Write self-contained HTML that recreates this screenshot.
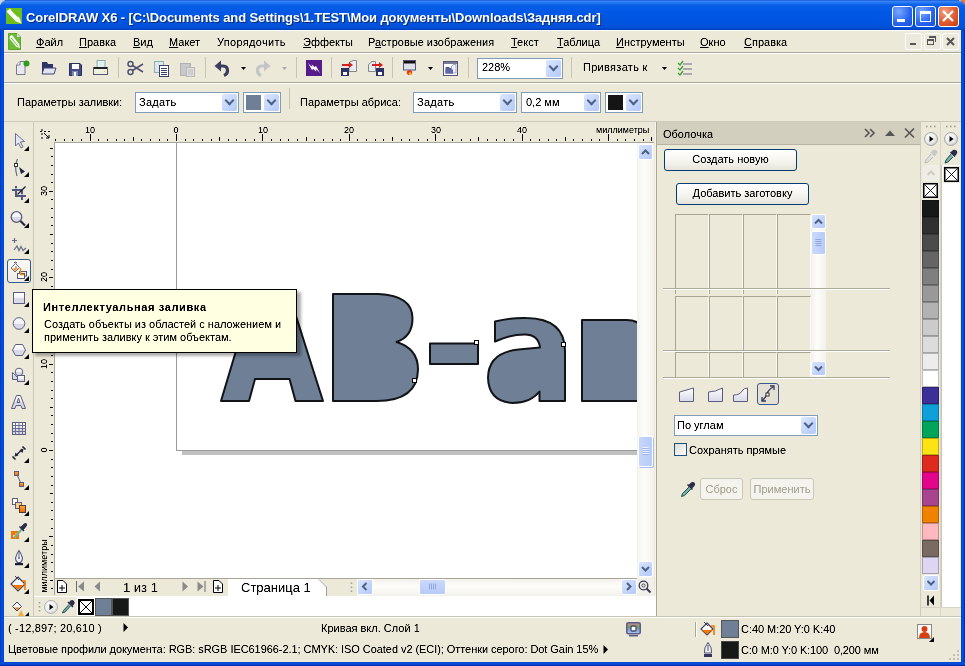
<!DOCTYPE html>
<html><head><meta charset="utf-8"><style>
*{margin:0;padding:0;box-sizing:border-box}
html,body{width:965px;height:666px;overflow:hidden;background:#ece9d8}
body{position:relative;font-family:"Liberation Sans",sans-serif;font-size:11px;color:#000}
.a{position:absolute}
.t{position:absolute;font-size:11px;line-height:13px;white-space:nowrap;filter:url(#tc)}
.u{text-decoration:underline;text-underline-offset:1px}
.sepv{position:absolute;width:1px;background:#c8c4b2}
.seph{position:absolute;height:2px;border-top:1px solid #aca899;border-bottom:1px solid #fff}
.combo{position:absolute;background:#fff;border:1px solid #7f9db9}
.cbtn{position:absolute;top:1px;bottom:1px;right:1px;width:15px;border-radius:2px;background:linear-gradient(135deg,#dde8fe 0%,#c6d7fb 50%,#b3c9f8 100%)}
.cbtn:after{content:"";position:absolute;left:4px;top:3px;width:5px;height:5px;border-right:2.4px solid #4d6185;border-bottom:2.4px solid #4d6185;transform:rotate(45deg)}
svg{position:absolute;overflow:visible}

</style></head><body><div id="root" style="position:absolute;left:0;top:0;width:965px;height:666px;overflow:hidden;will-change:transform">
<svg width="0" height="0" style="position:absolute"><filter id="tc"><feComponentTransfer><feFuncA type="table" tableValues="0 0.22 0.92 1"/></feComponentTransfer></filter></svg>
<!-- title bar -->
<div class="a" style="left:0;top:0;width:965px;height:30px;background:linear-gradient(#0a3fc2 0px,#3d8dfb 1px,#2e7ff5 2px,#0a5fe8 5px,#0058e6 12px,#0054e0 22px,#0050d8 28px,#003cb8 30px)"></div>
<div class="a" style="left:0;top:30px;width:4px;height:636px;background:linear-gradient(90deg,#0031b5,#0055e5 2px,#0042c8)"></div>
<div class="a" style="left:961px;top:30px;width:4px;height:636px;background:linear-gradient(90deg,#0042c8,#0055e5 2px,#00219c)"></div>
<div class="a" style="left:0;top:662px;width:965px;height:4px;background:linear-gradient(#0042c8,#0055e5 2px,#00219c)"></div>
<!-- app icon -->
<svg style="left:6px;top:8px" width="16" height="16"><rect width="16" height="16" fill="#6fbe1e"/><path d="M0.5 3.5 L4 0.5 L13.5 10 L10 13.5 Z" fill="#fff"/><path d="M10 13.5 L13.5 10 L15.5 15.5 Z" fill="#fff"/><path d="M5 1.5 L12 8.5" stroke="#6fbe1e" stroke-width="1.1"/></svg>
<svg style="left:0;top:0" width="6" height="6"><path d="M0 0 H5 L4 1 L2 2 L1 4 L0 5 Z" fill="#c9d1e0"/></svg>
<svg style="left:959px;top:0" width="6" height="6"><path d="M0 0 H6 V5 L5 4 L4 2 L2 1 Z" fill="#e8763a"/><path d="M0 0 H2 L1 1 Z" fill="#fff"/></svg>
<div class="a" style="left:27px;top:11px;font:bold 13px/16px 'Liberation Sans';color:#0a2a70;white-space:nowrap;letter-spacing:-0.1px">CorelDRAW X6 - [C:\Documents and Settings\1.TEST\Мои документы\Downloads\Задняя.cdr]</div>
<div class="a" style="left:26px;top:10px;font:bold 13px/16px 'Liberation Sans';color:#fff;white-space:nowrap;letter-spacing:-0.1px">CorelDRAW X6 - [C:\Documents and Settings\1.TEST\Мои документы\Downloads\Задняя.cdr]</div>
<!-- title buttons -->
<div class="a" style="left:892px;top:6px;width:21px;height:21px;border:1px solid #fff;border-radius:3px;background:radial-gradient(circle at 30% 25%,#7aa8ff,#2663ee 60%,#1c4fd8)"></div>
<div class="a" style="left:897px;top:19px;width:8px;height:3px;background:#fff"></div>
<div class="a" style="left:915px;top:6px;width:21px;height:21px;border:1px solid #fff;border-radius:3px;background:radial-gradient(circle at 30% 25%,#7aa8ff,#2663ee 60%,#1c4fd8)"></div>
<div class="a" style="left:920px;top:11px;width:11px;height:11px;border:1px solid #fff;border-top-width:3px"></div>
<div class="a" style="left:938px;top:6px;width:21px;height:21px;border:1px solid #fff;border-radius:3px;background:radial-gradient(circle at 30% 25%,#f0a080,#e05a30 55%,#c83c10)"></div>
<svg style="left:938px;top:6px" width="21" height="21"><path d="M5 5 L15 15 M15 5 L5 15" stroke="#fff" stroke-width="2.2"/></svg>

<!-- menu bar -->
<div class="a" style="left:4px;top:30px;width:957px;height:1px;background:#fff"></div>
<svg style="left:8px;top:33px" width="13" height="17"><path d="M0.5 0.5 H9 L12.5 4 V16.5 H0.5 Z" fill="#6cbd33" stroke="#5ea52c"/><path d="M9 0.5 V4 H12.5" fill="#d8d4ec"/><path d="M2 3 L4 2 L11 11 L12 15 L8 13.5 L1.5 5.5 Z" fill="#fff"/><path d="M3 5 L10 13" stroke="#6cbd33" stroke-width="1"/></svg>
<div class="t" style="left:36px;top:36px"><span class="u">Ф</span>айл</div>
<div class="t" style="left:79px;top:36px"><span class="u">П</span>равка</div>
<div class="t" style="left:133px;top:36px"><span class="u">В</span>ид</div>
<div class="t" style="left:169px;top:36px"><span class="u">М</span>акет</div>
<div class="t" style="left:217px;top:36px;letter-spacing:0.3px">Упорядочить</div>
<div class="t" style="left:303px;top:36px"><span class="u">Э</span>ффекты</div>
<div class="t" style="left:368px;top:36px">Р<span class="u">а</span>стровые изображения</div>
<div class="t" style="left:511px;top:36px"><span class="u">Т</span>екст</div>
<div class="t" style="left:557px;top:36px"><span class="u">Т</span>аблица</div>
<div class="t" style="left:616px;top:36px"><span class="u">И</span>нструменты</div>
<div class="t" style="left:700px;top:36px"><span class="u">О</span>кно</div>
<div class="t" style="left:744px;top:36px"><span class="u">С</span>правка</div>
<!-- mdi buttons -->
<div class="a" style="left:905px;top:33px;width:17px;height:17px;border:1px solid #fff;border-radius:2px;background:#ebe8dc"></div>
<div class="a" style="left:910px;top:43px;width:6px;height:2px;background:#555"></div>
<div class="a" style="left:924px;top:33px;width:17px;height:17px;border:1px solid #fff;border-radius:2px;background:#ebe8dc"></div>
<div class="a" style="left:927px;top:39px;width:7px;height:6px;border:1px solid #555;border-top-width:2px"></div>
<div class="a" style="left:929px;top:36px;width:7px;height:6px;border-top:2px solid #555;border-right:1px solid #555"></div>
<div class="a" style="left:942px;top:33px;width:17px;height:17px;border:1px solid #fff;border-radius:2px;background:#ebe8dc"></div>
<svg style="left:942px;top:33px" width="17" height="17"><path d="M5 5 L12 12 M12 5 L5 12" stroke="#555" stroke-width="2"/></svg>
<div class="seph" style="left:4px;top:52px;width:957px"></div>
<!-- standard toolbar -->
<div class="seph" style="left:4px;top:82px;width:957px"></div>
<div class="sepv" style="left:118px;top:57px;height:21px"></div>
<div class="sepv" style="left:205px;top:57px;height:21px"></div>
<div class="sepv" style="left:296px;top:57px;height:21px"></div>
<div class="sepv" style="left:331px;top:57px;height:21px"></div>
<div class="sepv" style="left:392px;top:57px;height:21px"></div>
<div class="sepv" style="left:468px;top:57px;height:21px"></div>
<div class="sepv" style="left:571px;top:57px;height:21px"></div>
<!-- new -->
<svg style="left:15px;top:60px" width="16" height="16"><path d="M1.5 5 L5 1.5 H10 V14.5 H1.5 Z" fill="#e8e8f0" stroke="#7a7a90"/><path d="M1.5 5 H5 V1.5" fill="#fff" stroke="#7a7a90"/><circle cx="11.5" cy="3.5" r="3" fill="#2e9a1e"/></svg>
<!-- open -->
<svg style="left:41px;top:60px" width="16" height="16"><path d="M1 2 H6 L7 4 H12 V14 H1 Z" fill="#2d3566"/><path d="M3 8 H15 L13 14 H1 Z" fill="#dfe3f2" stroke="#3d4575"/></svg>
<!-- save -->
<svg style="left:69px;top:63px" width="13" height="13"><path d="M0.5 0.5 H11 L12.5 2 V12.5 H0.5 Z" fill="#454a80" stroke="#2a2f60"/><rect x="3" y="1" width="7" height="5" fill="#fff"/><rect x="3" y="8" width="6" height="5" fill="#8088b8"/><rect x="5" y="9" width="2" height="4" fill="#fff"/></svg>
<!-- print -->
<svg style="left:93px;top:60px" width="16" height="16"><rect x="4" y="0.5" width="8" height="7" fill="#e0f0f0" stroke="#8aa"/><rect x="0.5" y="7.5" width="14" height="7" fill="#f0f0e0" stroke="#555a70"/><rect x="1" y="7" width="13" height="2" fill="#222"/><rect x="11" y="11" width="1" height="1" fill="#dc0"/></svg>
<!-- cut -->
<svg style="left:127px;top:60px" width="17" height="16"><circle cx="3.5" cy="4" r="2.5" fill="none" stroke="#505070" stroke-width="1.5"/><circle cx="3.5" cy="12" r="2.5" fill="none" stroke="#505070" stroke-width="1.5"/><path d="M5.5 5.5 L16 12 M5.5 10.5 L16 4" stroke="#505070" stroke-width="1.5"/></svg>
<!-- copy -->
<svg style="left:154px;top:61px" width="16" height="16"><rect x="0.5" y="0.5" width="9" height="11" fill="#dce8e8" stroke="#8ab0b0"/><rect x="5.5" y="4.5" width="9" height="11" fill="#fff" stroke="#3a4070"/><path d="M7 7.5 H13 M7 9.5 H13 M7 11.5 H13 M7 13.5 H13" stroke="#3a4070"/></svg>
<!-- paste -->
<svg style="left:180px;top:61px" width="16" height="16"><rect x="0.5" y="2.5" width="10" height="12" fill="#c8c8c8" stroke="#b0b0b0"/><rect x="6.5" y="6.5" width="8" height="9" fill="#e0e0e0" stroke="#b8b8b8"/><path d="M8 9 H13 M8 11 H13 M8 13 H13" stroke="#bbb"/></svg>
<!-- undo -->
<svg style="left:214px;top:60px" width="16" height="17"><path d="M0.5 6 L7 0.5 V11.5 Z" fill="#3a3e5e"/><path d="M6 6 H9 Q13.5 6 13.5 10.5 Q13.5 14 10 15.5" stroke="#3a3e5e" stroke-width="3.2" fill="none"/></svg>
<svg style="left:241px;top:67px" width="6" height="4"><path d="M0 0 H5 L2.5 3 Z" fill="#000"/></svg>
<!-- redo -->
<svg style="left:255px;top:60px" width="16" height="17"><path d="M15.5 6 L9 0.5 V11.5 Z" fill="#c4c4c8"/><path d="M10 6 H7 Q2.5 6 2.5 10.5 Q2.5 14 6 15.5" stroke="#c4c4c8" stroke-width="3.2" fill="none"/></svg>
<svg style="left:282px;top:67px" width="6" height="4"><path d="M0 0 H5 L2.5 3 Z" fill="#aaa"/></svg>
<!-- purple (smart/corel connect) -->
<svg style="left:306px;top:60px" width="16" height="16"><rect width="16" height="16" fill="#561c8a"/><path d="M2 2.5 Q4 6 6.5 7 L5.5 4.5 Q8 5.5 9 8 L6 10 Q4 7 2 2.5 Z" fill="#fff"/><path d="M14 13.5 Q12 10 9.5 9 L10.5 11.5 Q8 10.5 7 8 L10 6 Q12 9 14 13.5 Z" fill="#fff"/></svg>
<!-- import -->
<svg style="left:340px;top:60px" width="17" height="16"><path d="M9 2.5 L13 0.5 H16.5 V11.5 H9 Z" fill="#e8ecf4" stroke="#888"/><rect x="1" y="8" width="8" height="8" fill="#2d3266"/><rect x="3" y="12" width="4" height="3" fill="#fff"/><path d="M2 5 H10" stroke="#d42020" stroke-width="2"/><path d="M9 2 L13 5 L9 8 Z" fill="#d42020"/></svg>
<!-- export -->
<svg style="left:367px;top:60px" width="17" height="16"><path d="M1.5 4.5 L5 1.5 H8.5 V11.5 H1.5 Z" fill="#e8ecf4" stroke="#888"/><rect x="9" y="8" width="8" height="8" fill="#2d3266"/><rect x="11" y="12" width="4" height="3" fill="#fff"/><path d="M5 5 H13" stroke="#d42020" stroke-width="2"/><path d="M12 2 L16 5 L12 8 Z" fill="#d42020"/></svg>
<!-- app launcher -->
<svg style="left:403px;top:60px" width="14" height="16"><rect x="0.5" y="0.5" width="12" height="9.5" fill="#e0e0ea" stroke="#55557a"/><rect x="1" y="1" width="11" height="2.5" fill="#111"/><circle cx="6.5" cy="12.5" r="2.6" fill="#f03010"/><circle cx="7" cy="13.5" r="1.3" fill="#ffd020"/></svg>
<svg style="left:428px;top:67px" width="6" height="4"><path d="M0 0 H5 L2.5 3 Z" fill="#000"/></svg>
<!-- welcome -->
<svg style="left:443px;top:61px" width="16" height="15"><rect x="0.5" y="0.5" width="14" height="14" fill="#fff" stroke="#55557a"/><rect x="1" y="1" width="13" height="2" fill="#7a7a9a"/><path d="M2.5 6 H6 L7 7 H10 V12.5 H2.5 Z" fill="#5a5aa0"/><path d="M8.5 5 L10.5 3.5 H13 V12 H8.5 Z" fill="#eef2f8" stroke="#8898b0" stroke-width="0.8"/><path d="M2.5 8.5 H10 V12.5 H2.5 Z" fill="#6464a8"/></svg>
<!-- zoom combo -->
<div class="combo" style="left:477px;top:58px;width:86px;height:21px"><div class="cbtn"></div></div>
<div class="t" style="left:482px;top:61px">228%</div>
<div class="t" style="left:583px;top:61px;letter-spacing:0.3px">Привязать к</div>
<svg style="left:662px;top:67px" width="6" height="4"><path d="M0 0 H5 L2.5 3 Z" fill="#000"/></svg>
<svg style="left:677px;top:60px" width="16" height="16"><path d="M1 3 L3 5 L6 1 M1 8 L3 10 L6 6 M1 13 L3 15 L6 11" stroke="#3aa030" stroke-width="1.3" fill="none"/><path d="M6 4 H15 M6 9 H15 M6 14 H15" stroke="#6a6a8a" stroke-width="1"/></svg>
<!-- property bar -->
<div class="t" style="left:17px;top:96px">Параметры заливки:</div>
<div class="combo" style="left:135px;top:92px;width:104px;height:21px"><div class="cbtn"></div></div>
<div class="t" style="left:139px;top:96px;letter-spacing:0.3px">Задать</div>
<div class="combo" style="left:243px;top:92px;width:38px;height:21px;background:#fff"><div class="cbtn"></div><div class="a" style="left:2px;top:2px;width:15px;height:15px;background:#6e7f96"></div></div>
<div class="sepv" style="left:289px;top:88px;height:21px"></div>
<div class="t" style="left:300px;top:96px">Параметры абриса:</div>
<div class="combo" style="left:413px;top:92px;width:104px;height:21px"><div class="cbtn"></div></div>
<div class="t" style="left:417px;top:96px;letter-spacing:0.3px">Задать</div>
<div class="combo" style="left:521px;top:92px;width:80px;height:21px"><div class="cbtn"></div></div>
<div class="t" style="left:526px;top:96px">0,2 мм</div>
<div class="combo" style="left:605px;top:92px;width:38px;height:21px"><div class="cbtn"></div><div class="a" style="left:2px;top:2px;width:15px;height:15px;background:#151515"></div></div>


<div class="a" style="left:33px;top:122px;width:1px;height:495px;background:#cdc9b8"></div>
<div class="a" style="left:4px;top:121px;width:957px;height:1px;background:#cdc9b8"></div>
<div class="a" style="left:54px;top:142px;width:600px;height:1px;background:#a8a598"></div>
<div class="a" style="left:54px;top:142px;width:1px;height:453px;background:#a8a598"></div>
<div class="a" style="left:55px;top:139px;width:1px;height:2px;background:#000"></div><div class="a" style="left:64px;top:139px;width:1px;height:2px;background:#000"></div><div class="a" style="left:72px;top:139px;width:1px;height:2px;background:#000"></div><div class="a" style="left:81px;top:139px;width:1px;height:2px;background:#000"></div><div class="a" style="left:90px;top:134px;width:1px;height:7px;background:#000"></div><div class="a" style="left:98px;top:139px;width:1px;height:2px;background:#000"></div><div class="a" style="left:107px;top:139px;width:1px;height:2px;background:#000"></div><div class="a" style="left:116px;top:139px;width:1px;height:2px;background:#000"></div><div class="a" style="left:124px;top:139px;width:1px;height:2px;background:#000"></div><div class="a" style="left:133px;top:137px;width:1px;height:4px;background:#000"></div><div class="a" style="left:141px;top:139px;width:1px;height:2px;background:#000"></div><div class="a" style="left:150px;top:139px;width:1px;height:2px;background:#000"></div><div class="a" style="left:159px;top:139px;width:1px;height:2px;background:#000"></div><div class="a" style="left:167px;top:139px;width:1px;height:2px;background:#000"></div><div class="a" style="left:176px;top:134px;width:1px;height:7px;background:#000"></div><div class="a" style="left:185px;top:139px;width:1px;height:2px;background:#000"></div><div class="a" style="left:193px;top:139px;width:1px;height:2px;background:#000"></div><div class="a" style="left:202px;top:139px;width:1px;height:2px;background:#000"></div><div class="a" style="left:211px;top:139px;width:1px;height:2px;background:#000"></div><div class="a" style="left:219px;top:137px;width:1px;height:4px;background:#000"></div><div class="a" style="left:228px;top:139px;width:1px;height:2px;background:#000"></div><div class="a" style="left:236px;top:139px;width:1px;height:2px;background:#000"></div><div class="a" style="left:245px;top:139px;width:1px;height:2px;background:#000"></div><div class="a" style="left:254px;top:139px;width:1px;height:2px;background:#000"></div><div class="a" style="left:262px;top:134px;width:1px;height:7px;background:#000"></div><div class="a" style="left:271px;top:139px;width:1px;height:2px;background:#000"></div><div class="a" style="left:280px;top:139px;width:1px;height:2px;background:#000"></div><div class="a" style="left:288px;top:139px;width:1px;height:2px;background:#000"></div><div class="a" style="left:297px;top:139px;width:1px;height:2px;background:#000"></div><div class="a" style="left:306px;top:137px;width:1px;height:4px;background:#000"></div><div class="a" style="left:314px;top:139px;width:1px;height:2px;background:#000"></div><div class="a" style="left:323px;top:139px;width:1px;height:2px;background:#000"></div><div class="a" style="left:332px;top:139px;width:1px;height:2px;background:#000"></div><div class="a" style="left:340px;top:139px;width:1px;height:2px;background:#000"></div><div class="a" style="left:349px;top:134px;width:1px;height:7px;background:#000"></div><div class="a" style="left:357px;top:139px;width:1px;height:2px;background:#000"></div><div class="a" style="left:366px;top:139px;width:1px;height:2px;background:#000"></div><div class="a" style="left:375px;top:139px;width:1px;height:2px;background:#000"></div><div class="a" style="left:383px;top:139px;width:1px;height:2px;background:#000"></div><div class="a" style="left:392px;top:137px;width:1px;height:4px;background:#000"></div><div class="a" style="left:401px;top:139px;width:1px;height:2px;background:#000"></div><div class="a" style="left:409px;top:139px;width:1px;height:2px;background:#000"></div><div class="a" style="left:418px;top:139px;width:1px;height:2px;background:#000"></div><div class="a" style="left:427px;top:139px;width:1px;height:2px;background:#000"></div><div class="a" style="left:435px;top:134px;width:1px;height:7px;background:#000"></div><div class="a" style="left:444px;top:139px;width:1px;height:2px;background:#000"></div><div class="a" style="left:452px;top:139px;width:1px;height:2px;background:#000"></div><div class="a" style="left:461px;top:139px;width:1px;height:2px;background:#000"></div><div class="a" style="left:470px;top:139px;width:1px;height:2px;background:#000"></div><div class="a" style="left:478px;top:137px;width:1px;height:4px;background:#000"></div><div class="a" style="left:487px;top:139px;width:1px;height:2px;background:#000"></div><div class="a" style="left:496px;top:139px;width:1px;height:2px;background:#000"></div><div class="a" style="left:504px;top:139px;width:1px;height:2px;background:#000"></div><div class="a" style="left:513px;top:139px;width:1px;height:2px;background:#000"></div><div class="a" style="left:522px;top:134px;width:1px;height:7px;background:#000"></div><div class="a" style="left:530px;top:139px;width:1px;height:2px;background:#000"></div><div class="a" style="left:539px;top:139px;width:1px;height:2px;background:#000"></div><div class="a" style="left:548px;top:139px;width:1px;height:2px;background:#000"></div><div class="a" style="left:556px;top:139px;width:1px;height:2px;background:#000"></div><div class="a" style="left:565px;top:137px;width:1px;height:4px;background:#000"></div><div class="a" style="left:573px;top:139px;width:1px;height:2px;background:#000"></div><div class="a" style="left:582px;top:139px;width:1px;height:2px;background:#000"></div><div class="a" style="left:591px;top:139px;width:1px;height:2px;background:#000"></div><div class="a" style="left:599px;top:139px;width:1px;height:2px;background:#000"></div><div class="a" style="left:608px;top:134px;width:1px;height:7px;background:#000"></div><div class="a" style="left:617px;top:139px;width:1px;height:2px;background:#000"></div><div class="a" style="left:625px;top:139px;width:1px;height:2px;background:#000"></div><div class="a" style="left:634px;top:139px;width:1px;height:2px;background:#000"></div><div class="a" style="left:643px;top:139px;width:1px;height:2px;background:#000"></div><div class="a" style="left:651px;top:137px;width:1px;height:4px;background:#000"></div>
<div class="a" style="left:70px;top:125px;width:40px;text-align:center;font:9px/10px 'Liberation Sans';filter:url(#tc);">10</div>
<div class="a" style="left:156px;top:125px;width:40px;text-align:center;font:9px/10px 'Liberation Sans';filter:url(#tc);">0</div>
<div class="a" style="left:243px;top:125px;width:40px;text-align:center;font:9px/10px 'Liberation Sans';filter:url(#tc);">10</div>
<div class="a" style="left:329px;top:125px;width:40px;text-align:center;font:9px/10px 'Liberation Sans';filter:url(#tc);">20</div>
<div class="a" style="left:416px;top:125px;width:40px;text-align:center;font:9px/10px 'Liberation Sans';filter:url(#tc);">30</div>
<div class="a" style="left:502px;top:125px;width:40px;text-align:center;font:9px/10px 'Liberation Sans';filter:url(#tc);">40</div>
<div class="a" style="left:596px;top:125px;font:9px/10px 'Liberation Sans';filter:url(#tc);white-space:nowrap">миллиметры</div>
<div class="a" style="left:51px;top:588px;width:2px;height:1px;background:#000"></div><div class="a" style="left:50px;top:580px;width:3px;height:1px;background:#000"></div><div class="a" style="left:51px;top:571px;width:2px;height:1px;background:#000"></div><div class="a" style="left:51px;top:562px;width:2px;height:1px;background:#000"></div><div class="a" style="left:51px;top:554px;width:2px;height:1px;background:#000"></div><div class="a" style="left:51px;top:545px;width:2px;height:1px;background:#000"></div><div class="a" style="left:49px;top:536px;width:4px;height:1px;background:#000"></div><div class="a" style="left:51px;top:528px;width:2px;height:1px;background:#000"></div><div class="a" style="left:51px;top:519px;width:2px;height:1px;background:#000"></div><div class="a" style="left:51px;top:510px;width:2px;height:1px;background:#000"></div><div class="a" style="left:51px;top:502px;width:2px;height:1px;background:#000"></div><div class="a" style="left:50px;top:493px;width:3px;height:1px;background:#000"></div><div class="a" style="left:51px;top:485px;width:2px;height:1px;background:#000"></div><div class="a" style="left:51px;top:476px;width:2px;height:1px;background:#000"></div><div class="a" style="left:51px;top:467px;width:2px;height:1px;background:#000"></div><div class="a" style="left:51px;top:459px;width:2px;height:1px;background:#000"></div><div class="a" style="left:49px;top:450px;width:4px;height:1px;background:#000"></div><div class="a" style="left:51px;top:441px;width:2px;height:1px;background:#000"></div><div class="a" style="left:51px;top:433px;width:2px;height:1px;background:#000"></div><div class="a" style="left:51px;top:424px;width:2px;height:1px;background:#000"></div><div class="a" style="left:51px;top:415px;width:2px;height:1px;background:#000"></div><div class="a" style="left:50px;top:407px;width:3px;height:1px;background:#000"></div><div class="a" style="left:51px;top:398px;width:2px;height:1px;background:#000"></div><div class="a" style="left:51px;top:390px;width:2px;height:1px;background:#000"></div><div class="a" style="left:51px;top:381px;width:2px;height:1px;background:#000"></div><div class="a" style="left:51px;top:372px;width:2px;height:1px;background:#000"></div><div class="a" style="left:49px;top:364px;width:4px;height:1px;background:#000"></div><div class="a" style="left:51px;top:355px;width:2px;height:1px;background:#000"></div><div class="a" style="left:51px;top:346px;width:2px;height:1px;background:#000"></div><div class="a" style="left:51px;top:338px;width:2px;height:1px;background:#000"></div><div class="a" style="left:51px;top:329px;width:2px;height:1px;background:#000"></div><div class="a" style="left:50px;top:320px;width:3px;height:1px;background:#000"></div><div class="a" style="left:51px;top:312px;width:2px;height:1px;background:#000"></div><div class="a" style="left:51px;top:303px;width:2px;height:1px;background:#000"></div><div class="a" style="left:51px;top:294px;width:2px;height:1px;background:#000"></div><div class="a" style="left:51px;top:286px;width:2px;height:1px;background:#000"></div><div class="a" style="left:49px;top:277px;width:4px;height:1px;background:#000"></div><div class="a" style="left:51px;top:269px;width:2px;height:1px;background:#000"></div><div class="a" style="left:51px;top:260px;width:2px;height:1px;background:#000"></div><div class="a" style="left:51px;top:251px;width:2px;height:1px;background:#000"></div><div class="a" style="left:51px;top:243px;width:2px;height:1px;background:#000"></div><div class="a" style="left:50px;top:234px;width:3px;height:1px;background:#000"></div><div class="a" style="left:51px;top:225px;width:2px;height:1px;background:#000"></div><div class="a" style="left:51px;top:217px;width:2px;height:1px;background:#000"></div><div class="a" style="left:51px;top:208px;width:2px;height:1px;background:#000"></div><div class="a" style="left:51px;top:199px;width:2px;height:1px;background:#000"></div><div class="a" style="left:49px;top:191px;width:4px;height:1px;background:#000"></div><div class="a" style="left:51px;top:182px;width:2px;height:1px;background:#000"></div><div class="a" style="left:51px;top:174px;width:2px;height:1px;background:#000"></div><div class="a" style="left:51px;top:165px;width:2px;height:1px;background:#000"></div><div class="a" style="left:51px;top:156px;width:2px;height:1px;background:#000"></div><div class="a" style="left:50px;top:148px;width:3px;height:1px;background:#000"></div>
<div class="a" style="left:24px;top:186px;width:40px;height:10px;text-align:center;font:9px/10px 'Liberation Sans';filter:url(#tc);transform:rotate(-90deg);transform-origin:20px 5px;left:24px">30</div>
<div class="a" style="left:24px;top:272px;width:40px;height:10px;text-align:center;font:9px/10px 'Liberation Sans';filter:url(#tc);transform:rotate(-90deg);transform-origin:20px 5px;left:24px">20</div>
<div class="a" style="left:24px;top:359px;width:40px;height:10px;text-align:center;font:9px/10px 'Liberation Sans';filter:url(#tc);transform:rotate(-90deg);transform-origin:20px 5px;left:24px">10</div>
<div class="a" style="left:24px;top:445px;width:40px;height:10px;text-align:center;font:9px/10px 'Liberation Sans';filter:url(#tc);transform:rotate(-90deg);transform-origin:20px 5px;left:24px">0</div>
<div class="a" style="left:14px;top:561px;width:60px;height:10px;text-align:center;font:9px/10px 'Liberation Sans';filter:url(#tc);transform:rotate(-90deg);transform-origin:30px 5px">миллиметры</div>
<svg style="left:40px;top:129px" width="12" height="12"><path d="M2 0 V2 M0 2.5 H2 M2 4 V6 M4 2.5 H6 M8 2.5 H10 M2 8 V10" stroke="#000" stroke-width="1"/><path d="M4 4 L9 9 M9 6 V9 H6" stroke="#000" stroke-width="1" fill="none"/></svg>
<div class="a" style="left:55px;top:143px;width:582px;height:435px;background:#fff;overflow:hidden"><div class="a" style="left:121px;top:0;width:470px;height:308px;border-left:1px solid #9a9a9a;border-bottom:1px solid #9a9a9a"></div><div class="a" style="left:127px;top:308px;width:470px;height:4px;background:#c0c0c0"></div></div>
<!-- artwork -->
<svg style="left:0;top:0;overflow:hidden" width="637" height="578">
<g fill="#6e7f96" stroke="#111316" stroke-width="2" stroke-linejoin="round" transform="translate(0.5 0.5)">
<path d="M220.5 400.5 L252.5 293.5 L288.5 293.5 L322.5 400.5 L295 400.5 L289 378.5 L254.5 378.5 L248.5 400.5 Z"/>
<path d="M332.5 293.5 L378 293.5 Q412 295 412 318 Q412 336 396 341.5 Q417.5 348 417.5 369 Q417 400.5 376 400.5 L332.5 400.5 Z"/>
<path d="M429.5 343 L477.5 343 L477.5 363.5 L429.5 363.5 Z"/>
<path d="M494.5 321 Q512 317 526 317.5 Q564 318 564.5 350 L564.5 400.5 L539 400.5 L539 391 Q530 402.5 512 402.5 Q488 401 487.5 377 Q488 352 518 349 L539.5 347 Q538 334 524 334 Q510 334 494.5 341 Z"/>
<path d="M581.5 319.5 L626 319.5 Q645 319.5 645 340 L645 400.5 L581.5 400.5 Z"/>
</g>
<g fill="#fff" stroke="#000" stroke-width="1">
<rect x="412.5" y="378.5" width="4" height="4"/>
<rect x="474.5" y="340.5" width="4" height="4"/>
<rect x="561.5" y="342.5" width="4" height="4"/>
</g>
</svg>
<!-- tooltip -->
<div class="a" style="left:35px;top:292px;width:266px;height:64px;background:rgba(0,0,0,0.32);filter:blur(1.6px)"></div>
<div class="a" style="left:32px;top:289px;width:265px;height:64px;background:#ffffe1;border:1px solid #000"></div>
<div class="t" style="left:43px;top:301px;font-weight:bold;letter-spacing:0.62px">Интеллектуальная заливка</div>
<div class="t" style="left:44px;top:318px">Создать объекты из областей с наложением и</div>
<div class="t" style="left:44px;top:331px">применить заливку к этим объектам.</div>
<!-- vertical scrollbar -->
<div class="a" style="left:637px;top:143px;width:17px;height:435px;background:linear-gradient(90deg,#f3f1ec,#fdfdfa 40%,#f3f1ec)"></div>
<div class="a" style="left:638px;top:144px;width:15px;height:16px;border:1px solid #fff;border-radius:2px;background:linear-gradient(135deg,#d8e4fd,#b4c9f8)"></div>
<svg style="left:638px;top:144px" width="15" height="16"><path d="M4 10 L7.5 6.5 L11 10" stroke="#4d6185" stroke-width="2" fill="none"/></svg>
<div class="a" style="left:638px;top:436px;width:15px;height:31px;border:1px solid #fff;border-radius:2px;background:linear-gradient(90deg,#c6d6fc,#b8cbf7);box-shadow:1px 1px 0 #a8c0f0"></div>
<svg style="left:638px;top:436px" width="15" height="31"><path d="M4.5 11.5 H10.5 M4.5 13.5 H10.5 M4.5 15.5 H10.5 M4.5 17.5 H10.5" stroke="#eef3ff" stroke-width="1"/><path d="M4.5 12.5 H10.5 M4.5 14.5 H10.5 M4.5 16.5 H10.5 M4.5 18.5 H10.5" stroke="#9cb4ea" stroke-width="1"/></svg>
<div class="a" style="left:638px;top:561px;width:15px;height:16px;border:1px solid #fff;border-radius:2px;background:linear-gradient(135deg,#d8e4fd,#b4c9f8)"></div>
<svg style="left:638px;top:561px" width="15" height="16"><path d="M4 6 L7.5 9.5 L11 6" stroke="#4d6185" stroke-width="2" fill="none"/></svg>
<!-- page navigator -->
<div class="a" style="left:55px;top:578px;width:582px;height:1px;background:#a8a598"></div>
<div class="a" style="left:637px;top:578px;width:17px;height:18px;background:#f1f0ea"></div>
<svg style="left:57px;top:580px" width="12" height="13"><path d="M0.5 0.5 H6 L9.5 4 V12.5 H0.5 Z" fill="#fff" stroke="#000"/><path d="M5 5 V11 M2 8 H8" stroke="#000"/></svg>
<svg style="left:76px;top:581px" width="9" height="11"><path d="M0.5 0 V11" stroke="#6a6a6a"/><path d="M8 0.5 L2 5.5 L8 10.5 Z" fill="#8a8a8a"/></svg>
<svg style="left:94px;top:581px" width="7" height="11"><path d="M6 0.5 L0.5 5.5 L6 10.5 Z" fill="#8a8a8a"/></svg>
<div class="t" style="left:123px;top:580px;font-size:13px;line-height:15px">1 из 1</div>
<svg style="left:182px;top:581px" width="7" height="11"><path d="M0.5 0.5 L6 5.5 L0.5 10.5 Z" fill="#8a8a8a"/></svg>
<svg style="left:197px;top:581px" width="9" height="11"><path d="M8 0 V11" stroke="#6a6a6a"/><path d="M0.5 0.5 L6.5 5.5 L0.5 10.5 Z" fill="#8a8a8a"/></svg>
<svg style="left:213px;top:580px" width="12" height="13"><path d="M0.5 0.5 H6 L9.5 4 V12.5 H0.5 Z" fill="#fff" stroke="#000"/><path d="M5 5 V11 M2 8 H8" stroke="#000"/></svg>
<svg style="left:228px;top:579px" width="100" height="17"><path d="M0 0 H91 L98 7 V17 H0 Z" fill="#fff"/><path d="M91 0.5 L98.5 8 V17" stroke="#a0a0a0" fill="none"/></svg>
<div class="t" style="left:241px;top:580px;font-size:13px;line-height:15px">Страница 1</div>
<svg style="left:350px;top:581px" width="4" height="13"><path d="M1.5 1.5 V3 M1.5 5.5 V7 M1.5 9.5 V11" stroke="#a0a0a0" stroke-width="1.6"/></svg>
<div class="a" style="left:357px;top:579px;width:280px;height:17px;background:linear-gradient(#f3f1ec,#fdfdfa 40%,#f3f1ec)"></div>
<div class="a" style="left:357px;top:579px;width:16px;height:16px;border:1px solid #fff;border-radius:2px;background:linear-gradient(135deg,#d8e4fd,#b4c9f8)"></div>
<svg style="left:357px;top:579px" width="16" height="16"><path d="M9.5 4 L6 7.5 L9.5 11" stroke="#4d6185" stroke-width="2" fill="none"/></svg>
<div class="a" style="left:419px;top:579px;width:27px;height:16px;border:1px solid #fff;border-radius:2px;background:linear-gradient(#cad9fc,#b8cbf7)"></div>
<svg style="left:419px;top:579px" width="27" height="16"><path d="M10.5 4.5 V10.5 M12.5 4.5 V10.5 M14.5 4.5 V10.5 M16.5 4.5 V10.5" stroke="#8fa8e0"/></svg>
<div class="a" style="left:621px;top:579px;width:16px;height:16px;border:1px solid #fff;border-radius:2px;background:linear-gradient(135deg,#d8e4fd,#b4c9f8)"></div>
<svg style="left:621px;top:579px" width="16" height="16"><path d="M6 4 L9.5 7.5 L6 11" stroke="#4d6185" stroke-width="2" fill="none"/></svg>
<svg style="left:638px;top:580px" width="15" height="14"><circle cx="5.5" cy="5.5" r="4.3" fill="none" stroke="#3a3a50" stroke-width="1.3"/><circle cx="5.5" cy="5.5" r="1.6" fill="none" stroke="#3a3a50" stroke-width="0.9"/><path d="M8.5 8.5 L12.5 12.5" stroke="#3a3a50" stroke-width="2"/></svg>
<!-- document palette -->
<div class="a" style="left:34px;top:596px;width:622px;height:1px;background:#fff"></div>
<div class="a" style="left:77px;top:597px;width:579px;height:19px;background:#fff"></div>

<svg style="left:38px;top:601px" width="3" height="13"><path d="M1.5 1 V2.5 M1.5 5 V6.5 M1.5 9 V10.5" stroke="#a0a0a0" stroke-width="1.6"/></svg>
<div class="a" style="left:44px;top:600px;width:14px;height:14px;border-radius:50%;background:radial-gradient(circle at 40% 35%,#fff,#ececec 55%,#bcbcbc);border:1px solid #b0b0b0"></div>
<svg style="left:44px;top:600px" width="14" height="14"><path d="M5.5 4 L9.5 7 L5.5 10 Z" fill="#000"/></svg>
<svg style="left:62px;top:600px" width="13" height="14"><path d="M8.5 0.5 Q10.5 -0.5 12 1 Q13.5 2.5 12 4.5 L10.5 6 L7 2.5 Z" fill="#2a2e4a"/><path d="M6 2 L11 7" stroke="#2a2e4a" stroke-width="1.6"/><path d="M7 4.5 L1.5 10.5 L0.5 13 L3 12 L8.5 6" fill="#6fb4a8" stroke="#2a4a50"/></svg>
<svg style="left:78px;top:599px" width="16" height="16"><rect x="1" y="1" width="14" height="14" fill="#fff" stroke="#000" stroke-width="2"/><path d="M2 2 L14 14 M14 2 L2 14" stroke="#000"/></svg>
<div class="a" style="left:95px;top:598px;width:17px;height:18px;background:#6e7f96;border:1px solid #555"></div>
<div class="a" style="left:112px;top:598px;width:17px;height:18px;background:#171918;border:1px solid #555"></div>

<!-- toolbox -->
<div class="a" style="left:7px;top:259px;width:24px;height:24px;border:1px solid #3a5888;border-radius:3px;background:linear-gradient(#fbfbf8,#ecebe4)"></div>
<svg style="left:0;top:0" width="34" height="617">
<defs>
<linearGradient id="gl" x1="0" y1="0" x2="0" y2="1"><stop offset="0" stop-color="#fff"/><stop offset="0.5" stop-color="#f0f0f6"/><stop offset="0.55" stop-color="#d6d6e6"/><stop offset="1" stop-color="#dcdcea"/></linearGradient>
<linearGradient id="go" x1="0" y1="0" x2="0" y2="1"><stop offset="0" stop-color="#ffb030"/><stop offset="1" stop-color="#f06000"/></linearGradient>
</defs>
<g fill="#000">
<path d="M29 146 V151 H24 Z"/><path d="M29 172 V177 H24 Z"/><path d="M29 198 V203 H24 Z"/><path d="M29 223 V228 H24 Z"/><path d="M29 249 V254 H24 Z"/><path d="M29 276 V281 H24 Z"/><path d="M29 302 V307 H24 Z"/><path d="M29 328 V333 H24 Z"/><path d="M29 354 V359 H24 Z"/><path d="M29 380 V385 H24 Z"/><path d="M29 458 V463 H24 Z"/><path d="M29 485 V490 H24 Z"/><path d="M29 511 V516 H24 Z"/><path d="M29 537 V542 H24 Z"/><path d="M29 563 V568 H24 Z"/><path d="M29 589 V594 H24 Z"/><path d="M29 612 V617 H24 Z"/>
</g>
<!-- pick -->
<path d="M15.5 133.5 V146 L18.5 143 L21 148 L23 147 L20.5 142 L24.5 141.5 Z" fill="#e6e6f2" stroke="#6e6e92" stroke-linejoin="round"/>
<!-- shape -->
<path d="M17.5 159 Q14 166 17 176" fill="none" stroke="#6a6a8a" stroke-width="1.2"/>
<rect x="14.5" y="163.5" width="3" height="3" fill="#fff" stroke="#333"/>
<path d="M19 167 L25 171.5 L21 174 Z" fill="#23264a"/>
<!-- crop -->
<g fill="#55557e"><rect x="15" y="186" width="2" height="11"/><rect x="12" y="189" width="11" height="2"/><rect x="21" y="189" width="2" height="11"/><rect x="15" y="195" width="11" height="2"/></g><rect x="15" y="188" width="2" height="1" fill="#7ac8c8"/><rect x="21" y="194" width="2" height="1" fill="#7ac8c8"/><path d="M17.5 194.5 L25.5 186.5" stroke="#1c1e38" stroke-width="1.3"/>
<!-- zoom -->
<circle cx="16.5" cy="217" r="5.3" fill="url(#gl)" stroke="#5c5c7c" stroke-width="1.3"/><path d="M20.5 221 L25 225.5" stroke="#2a2a40" stroke-width="2.2"/>
<!-- freehand -->
<path d="M12 240.5 H17 M14.5 238 V243" stroke="#6a6a8e" stroke-width="1.2"/><path d="M14 250 L17 246 L19 250.5 L21 246.5 L23 250.5 L26 248" fill="none" stroke="#6a6a8e" stroke-width="1.2"/>
<!-- smart fill -->
<path d="M15.5 263.5 L19.5 267.5 L15 272 L11 268 Z" fill="#fff" stroke="#6a6a90"/><path d="M12.5 268.5 L15 271 L18 268 Z" fill="#f08a00"/><path d="M14 263 L15.5 262 L17 263" stroke="#44446a" fill="none"/><circle cx="16" cy="267" r="0.8" fill="#44446a"/>
<rect x="19.5" y="271.5" width="7" height="4.5" fill="none" stroke="#55557a"/><rect x="17.5" y="273.5" width="7" height="5" fill="#fff" stroke="#55557a"/><path d="M20.5 268 V274.5 H24" stroke="#f08a00" stroke-width="1.4" fill="none"/>
<!-- rectangle -->
<rect x="13.5" y="292.5" width="11" height="11" fill="url(#gl)" stroke="#5c5c80"/>
<!-- ellipse -->
<circle cx="19" cy="323.5" r="5.8" fill="url(#gl)" stroke="#5c5c80"/>
<!-- polygon -->
<path d="M15.5 344.5 H22.5 L25.5 350 L22.5 355.5 H15.5 L12.5 350 Z" fill="url(#gl)" stroke="#5c5c80"/>
<!-- basic shapes -->
<path d="M12.5 372.5 L12.5 379.5 L19.5 379.5 Z" fill="url(#gl)" stroke="#5c5c80"/><circle cx="19" cy="372" r="3.8" fill="url(#gl)" stroke="#5c5c80"/><rect x="17.5" y="375.5" width="7" height="6" fill="url(#gl)" stroke="#5c5c80"/>
<!-- text -->
<path d="M16.5 395.5 H20.5 L25.5 408.5 H22 L21 405.5 H16 L15 408.5 H11.5 Z M17 402.5 H20 L18.5 398 Z" fill="url(#gl)" stroke="#5c5c80" fill-rule="evenodd"/>
<!-- table -->
<rect x="12.5" y="422.5" width="13" height="12" fill="url(#gl)" stroke="#5c5c80"/><path d="M12.5 425.5 H25.5 M12.5 428.5 H25.5 M12.5 431.5 H25.5 M15.5 422.5 V434.5 M19 422.5 V434.5 M22.5 422.5 V434.5" stroke="#6c6c90"/>
<!-- dimension -->
<path d="M12.5 456.5 L15.5 459.5 M22.5 446.5 L25.5 449.5" stroke="#1c1e38" stroke-width="1.6"/><path d="M15.5 456 L22.5 449" stroke="#1c1e38" stroke-width="1.2"/><path d="M14.5 456.5 L18.5 455.5 L15.5 452.5 Z M23.5 449 L19.5 450 L22.5 453 Z" fill="#1c1e38"/>
<!-- connector -->
<path d="M16.5 473.5 L21 483.5" stroke="#5c5c80"/><rect x="14.5" y="471.5" width="4" height="4" fill="url(#go)" stroke="#5c5c80"/><rect x="19.5" y="482.5" width="4" height="4" fill="url(#go)" stroke="#5c5c80"/>
<!-- blend -->
<rect x="12.5" y="498.5" width="5" height="6" fill="#fff" stroke="#5c5c80"/><rect x="15.5" y="502.5" width="6" height="6" fill="#ffcf80" stroke="#5c5c80"/><rect x="19.5" y="505.5" width="6" height="7" fill="url(#go)" stroke="#4c3c40"/>
<!-- eyedropper -->
<rect x="11" y="531" width="8" height="8" fill="#f07800"/><rect x="13" y="535" width="2" height="2" fill="#ffd0a0"/><rect x="15" y="533" width="2" height="2" fill="#ffa040"/>
<path d="M14 538 L22 529" stroke="#6fb4a8" stroke-width="2"/><path d="M20.5 527 L24 523.5 Q26 522.5 27 524 Q27.5 525.5 26 527 L23 530.5 Z" fill="#2a2e4a"/><path d="M19.5 526.5 L24 531" stroke="#2a2e4a" stroke-width="1.5"/>
<!-- outline pen -->
<path d="M19 550.5 Q17 553 15.5 558 Q15.5 561 17.5 562.5 H20.5 Q22.5 561 22.5 558 Q21 553 19 550.5 Z" fill="#f0f0f8" stroke="#55557a" stroke-width="1.1"/><path d="M19 552 V557" stroke="#6a6a8a"/><circle cx="19" cy="558" r="0.9" fill="#55557a"/><rect x="15" y="563" width="8" height="2.2" fill="#1c1e38"/>
<!-- fill -->
<path d="M18 577 L25 584 L18 591 L11 584 Z" fill="#f7f7fa" stroke="#3a3e60" stroke-width="1.2"/><path d="M12.5 585 L18 590 L23.5 585 Z" fill="#f07800"/><path d="M22 581 H25 V590" stroke="#f07800" stroke-width="1.6" fill="none"/><path d="M15 576 L19 580" stroke="#3a3e60"/>
<!-- interactive fill -->
<path d="M17 602 L21.5 606.5 L17 611 L12.5 606.5 Z" fill="#f7f7fa" stroke="#3a3e60"/><path d="M14 607.5 L17 610 L20 607.5 Z" fill="#f07800"/><path d="M18 616 L21 610 L24 616 Z" fill="#f0b040"/>
</svg>

<!-- docker -->
<div class="a" style="left:654px;top:122px;width:2px;height:474px;background:#ece9d8"></div>
<div class="a" style="left:655px;top:122px;width:1px;height:474px;background:#f6f4ec"></div><div class="a" style="left:656px;top:122px;width:1px;height:495px;background:#aca897"></div>
<div class="a" style="left:657px;top:122px;width:264px;height:23px;background:#d3cfbe"></div>
<div class="a" style="left:657px;top:144px;width:264px;height:1px;background:#b8b4a2"></div>
<div class="a" style="left:920px;top:122px;width:1px;height:495px;background:#d0ccbc"></div>
<div class="t" style="left:663px;top:128px">Оболочка</div>
<svg style="left:864px;top:128px" width="12" height="10"><path d="M1 1 L5 5 L1 9 M6 1 L10 5 L6 9" stroke="#555" stroke-width="1.6" fill="none"/></svg>
<svg style="left:884px;top:129px" width="12" height="8"><path d="M1 7 L6 1.5 L11 7 Z" fill="#555"/></svg>
<svg style="left:904px;top:128px" width="11" height="10"><path d="M1 0.5 L10 9.5 M10 0.5 L1 9.5" stroke="#555" stroke-width="1.6"/></svg>
<!-- buttons -->
<div class="a" style="left:664px;top:149px;width:133px;height:22px;border:1px solid #003c74;border-radius:3px;background:linear-gradient(#fff,#f4f3ee 60%,#e6e4da)"></div>
<div class="t" style="left:664px;top:153px;width:133px;text-align:center">Создать новую</div>
<div class="a" style="left:676px;top:183px;width:133px;height:22px;border:1px solid #003c74;border-radius:3px;background:linear-gradient(#fff,#f4f3ee 60%,#e6e4da)"></div>
<div class="t" style="left:676px;top:187px;width:133px;text-align:center">Добавить заготовку</div>
<!-- preset grid -->
<div class="a" style="left:675px;top:214px;width:136px;height:163px;overflow:hidden">
<div class="a" style="left:0px;top:0px;width:34px;height:80px;border-left:1px solid #a8a492;border-top:1px solid #a8a492;border-right:1px solid #fbfaf6"></div>
<div class="a" style="left:34px;top:0px;width:34px;height:80px;border-left:1px solid #a8a492;border-top:1px solid #a8a492;border-right:1px solid #fbfaf6"></div>
<div class="a" style="left:68px;top:0px;width:34px;height:80px;border-left:1px solid #a8a492;border-top:1px solid #a8a492;border-right:1px solid #fbfaf6"></div>
<div class="a" style="left:102px;top:0px;width:34px;height:80px;border-left:1px solid #a8a492;border-top:1px solid #a8a492;border-right:1px solid #fbfaf6"></div>
<div class="a" style="left:0px;top:82px;width:34px;height:55px;border-left:1px solid #a8a492;border-top:1px solid #a8a492;border-right:1px solid #fbfaf6"></div>
<div class="a" style="left:34px;top:82px;width:34px;height:55px;border-left:1px solid #a8a492;border-top:1px solid #a8a492;border-right:1px solid #fbfaf6"></div>
<div class="a" style="left:68px;top:82px;width:34px;height:55px;border-left:1px solid #a8a492;border-top:1px solid #a8a492;border-right:1px solid #fbfaf6"></div>
<div class="a" style="left:102px;top:82px;width:34px;height:55px;border-left:1px solid #a8a492;border-top:1px solid #a8a492;border-right:1px solid #fbfaf6"></div>
<div class="a" style="left:0px;top:138px;width:34px;height:40px;border-left:1px solid #a8a492;border-top:1px solid #a8a492;border-right:1px solid #fbfaf6"></div>
<div class="a" style="left:34px;top:138px;width:34px;height:40px;border-left:1px solid #a8a492;border-top:1px solid #a8a492;border-right:1px solid #fbfaf6"></div>
<div class="a" style="left:68px;top:138px;width:34px;height:40px;border-left:1px solid #a8a492;border-top:1px solid #a8a492;border-right:1px solid #fbfaf6"></div>
<div class="a" style="left:102px;top:138px;width:34px;height:40px;border-left:1px solid #a8a492;border-top:1px solid #a8a492;border-right:1px solid #fbfaf6"></div>
</div>
<!-- grid scrollbar -->
<div class="a" style="left:811px;top:214px;width:15px;height:163px;background:linear-gradient(90deg,#f3f1ec,#fdfdfa 40%,#f3f1ec)"></div>
<div class="a" style="left:811px;top:214px;width:15px;height:15px;border:1px solid #fff;border-radius:2px;background:linear-gradient(135deg,#d8e4fd,#b4c9f8)"></div>
<svg style="left:811px;top:214px" width="15" height="15"><path d="M4 9.5 L7.5 6 L11 9.5" stroke="#4d6185" stroke-width="2" fill="none"/></svg>
<div class="a" style="left:811px;top:231px;width:15px;height:24px;border:1px solid #fff;border-radius:2px;background:linear-gradient(90deg,#cad9fc,#b8cbf7)"></div>
<svg style="left:811px;top:231px" width="15" height="24"><path d="M4.5 8.5 H10.5 M4.5 10.5 H10.5 M4.5 12.5 H10.5 M4.5 14.5 H10.5" stroke="#8fa8e0"/></svg>
<div class="a" style="left:811px;top:361px;width:15px;height:15px;border:1px solid #fff;border-radius:2px;background:linear-gradient(135deg,#d8e4fd,#b4c9f8)"></div>
<svg style="left:811px;top:361px" width="15" height="15"><path d="M4 5.5 L7.5 9 L11 5.5" stroke="#4d6185" stroke-width="2" fill="none"/></svg>
<div class="a" style="left:663px;top:288px;width:227px;height:2px;border-top:1px solid #aeaa98;border-bottom:1px solid #fff"></div>
<div class="a" style="left:663px;top:350px;width:227px;height:2px;border-top:1px solid #aeaa98;border-bottom:1px solid #fff"></div>
<div class="a" style="left:663px;top:377px;width:227px;height:2px;border-top:1px solid #aeaa98;border-bottom:1px solid #fff"></div>
<!-- mode icons -->
<svg style="left:678px;top:386px" width="110" height="20">
<path d="M1.5 15.5 V6 L15.5 2 V15.5 Z" fill="url(#gm)" stroke="#5c5c80"/>
<path d="M30.5 15.5 V6 Q37 6 44.5 2 V15.5 Z" fill="url(#gm)" stroke="#5c5c80"/>
<path d="M55.5 15.5 V9 Q62 9 64 5 Q66 2 69.5 2 V15.5 Z" fill="url(#gm)" stroke="#5c5c80"/>
<defs><linearGradient id="gm" x1="0" y1="0" x2="0" y2="1"><stop offset="0" stop-color="#fff"/><stop offset="1" stop-color="#d8d8e8"/></linearGradient></defs>
</svg>
<div class="a" style="left:757px;top:383px;width:22px;height:22px;border:1px solid #3a5888;border-radius:3px;background:#e4e1d4"></div>
<svg style="left:757px;top:383px" width="22" height="22"><path d="M5 18 Q9 14 10 11 Q11 7 16 4" stroke="#33365a" stroke-width="1.3" fill="none"/><rect x="9" y="10" width="3" height="3" fill="#fff" stroke="#333"/><path d="M13 3 H17 V7 M5 14 V18 H9" stroke="#33365a" stroke-width="1.3" fill="none"/></svg>
<!-- combo -->
<div class="combo" style="left:674px;top:415px;width:144px;height:21px"><div class="cbtn"></div></div>
<div class="t" style="left:677px;top:419px">По углам</div>
<!-- checkbox -->
<div class="a" style="left:674px;top:443px;width:13px;height:13px;border:1px solid #1c5180;background:linear-gradient(135deg,#dcdcd5,#fff)"></div>
<div class="t" style="left:689px;top:444px">Сохранять прямые</div>
<!-- eyedropper + buttons -->
<svg style="left:680px;top:481px" width="16" height="17"><path d="M12 1 Q14.5 0.5 15 2.5 Q15.5 4 14 5.5 L11.5 8 L8 4.5 L10.5 2 Z" fill="#2a2e4a"/><path d="M7.5 3.5 L12.5 8.5" stroke="#2a2e4a" stroke-width="1.5"/><path d="M9 6 L2.5 12.5 L1.5 15.5 L4.5 14.5 L11 8" fill="#6fb4a8" stroke="#2a4a50"/></svg>
<div class="a" style="left:700px;top:478px;width:43px;height:22px;border:1px solid #c9c7ba;border-radius:3px;background:#f4f3ee"></div>
<div class="t" style="left:700px;top:483px;width:43px;text-align:center;color:#aca899">Сброс</div>
<div class="a" style="left:750px;top:478px;width:64px;height:22px;border:1px solid #c9c7ba;border-radius:3px;background:#f4f3ee"></div>
<div class="t" style="left:750px;top:483px;width:64px;text-align:center;color:#aca899">Применить</div>

<div class="a" style="left:921px;top:122px;width:20px;height:495px;background:#ece9d8"></div>
<div class="a" style="left:940px;top:122px;width:1px;height:495px;background:#d8d4c6"></div>
<div class="a" style="left:941px;top:122px;width:20px;height:495px;background:#ece9d8"></div>
<svg style="left:925px;top:125px" width="13" height="3"><path d="M1 1.5 H2.5 M5 1.5 H6.5 M9 1.5 H10.5" stroke="#999" stroke-width="1.5"/></svg>
<svg style="left:945px;top:125px" width="13" height="3"><path d="M1 1.5 H2.5 M5 1.5 H6.5 M9 1.5 H10.5" stroke="#999" stroke-width="1.5"/></svg>
<div class="a" style="left:924px;top:132px;width:14px;height:14px;border-radius:50%;background:radial-gradient(circle at 40% 35%,#fff,#e8e8e8 55%,#b4b4b4);border:1px solid #a8a8a8"></div>
<svg style="left:924px;top:132px" width="14" height="14"><path d="M5.5 4 L9.5 7 L5.5 10 Z" fill="#000"/></svg>
<div class="a" style="left:944px;top:132px;width:14px;height:14px;border-radius:50%;background:radial-gradient(circle at 40% 35%,#fff,#e8e8e8 55%,#b4b4b4);border:1px solid #a8a8a8"></div>
<svg style="left:944px;top:132px" width="14" height="14"><path d="M5.5 4 L9.5 7 L5.5 10 Z" fill="#000"/></svg>
<svg style="left:924px;top:149px" width="14" height="15"><path d="M9 1 Q11 0 13 2 Q14 4 12 6 L10.5 7.5 L6.5 3.5 L8 2 Z" fill="#c8c8c8"/><path d="M7 5 L2 11 L1 14 L4 13 L9 8" fill="#e0e0e0" stroke="#bbb"/></svg>
<svg style="left:944px;top:149px" width="14" height="15"><path d="M9 1 Q11 0 13 2 Q14 4 12 6 L10.5 7.5 L6.5 3.5 L8 2 Z" fill="#2a2e4a"/><path d="M6.5 3 L11 7.5" stroke="#2a2e4a" stroke-width="1.5"/><path d="M7 5 L2 11 L1 14 L4 13 L9 8" fill="#6fb4a8" stroke="#2a4a50"/></svg>
<div class="a" style="left:923px;top:165px;width:16px;height:16px;border:1px solid #f0efe8;border-radius:2px;background:#eeede6"></div>
<svg style="left:923px;top:165px" width="16" height="16"><path d="M4.5 10 L8 6.5 L11.5 10" stroke="#cfcdc2" stroke-width="2" fill="none"/></svg>
<div class="a" style="left:942px;top:165px;width:18px;height:442px;background:#fff"></div>
<div class="a" style="left:941px;top:165px;width:1px;height:442px;background:#c8c4b6"></div>
<div class="a" style="left:922px;top:182px;width:17px;height:17px;background:#fff;border:1px solid #e8e6dc"></div>
<svg style="left:922px;top:182px" width="17" height="17"><rect x="1.75" y="1.75" width="13.5" height="13.5" fill="#fff" stroke="#000" stroke-width="1.5"/><path d="M2.5 2.5 L14.5 14.5 M14.5 2.5 L2.5 14.5" stroke="#000" stroke-width="0.9"/></svg>
<div class="a" style="left:943px;top:166px;width:17px;height:17px;background:#fff;border:1px solid #e8e6dc"></div>
<svg style="left:943px;top:166px" width="17" height="17"><rect x="1.75" y="1.75" width="13.5" height="13.5" fill="#fff" stroke="#000" stroke-width="1.5"/><path d="M2.5 2.5 L14.5 14.5 M14.5 2.5 L2.5 14.5" stroke="#000" stroke-width="0.9"/></svg>
<div class="a" style="left:922px;top:200px;width:17px;height:17px;background:#171918;border:1px solid #7a7a7a;border-color:rgba(0,0,0,0.25)"></div>
<div class="a" style="left:922px;top:217px;width:17px;height:17px;background:#303030;border:1px solid #7a7a7a;border-color:rgba(0,0,0,0.25)"></div>
<div class="a" style="left:922px;top:234px;width:17px;height:17px;background:#4b4b4b;border:1px solid #7a7a7a;border-color:rgba(0,0,0,0.25)"></div>
<div class="a" style="left:922px;top:251px;width:17px;height:17px;background:#656565;border:1px solid #7a7a7a;border-color:rgba(0,0,0,0.25)"></div>
<div class="a" style="left:922px;top:268px;width:17px;height:17px;background:#7f7f7f;border:1px solid #7a7a7a;border-color:rgba(0,0,0,0.25)"></div>
<div class="a" style="left:922px;top:285px;width:17px;height:17px;background:#999999;border:1px solid #7a7a7a;border-color:rgba(0,0,0,0.25)"></div>
<div class="a" style="left:922px;top:302px;width:17px;height:17px;background:#b2b2b2;border:1px solid #7a7a7a;border-color:rgba(0,0,0,0.25)"></div>
<div class="a" style="left:922px;top:319px;width:17px;height:17px;background:#cbcbcb;border:1px solid #7a7a7a;border-color:rgba(0,0,0,0.25)"></div>
<div class="a" style="left:922px;top:336px;width:17px;height:17px;background:#dcdcdc;border:1px solid #7a7a7a;border-color:rgba(0,0,0,0.25)"></div>
<div class="a" style="left:922px;top:353px;width:17px;height:17px;background:#ececec;border:1px solid #7a7a7a;border-color:rgba(0,0,0,0.25)"></div>
<div class="a" style="left:922px;top:370px;width:17px;height:17px;background:#ffffff;border:1px solid #7a7a7a;border-color:rgba(0,0,0,0.25)"></div>
<div class="a" style="left:922px;top:387px;width:17px;height:17px;background:#3d2f98;border:1px solid #7a7a7a;border-color:rgba(0,0,0,0.25)"></div>
<div class="a" style="left:922px;top:404px;width:17px;height:17px;background:#0fa0d9;border:1px solid #7a7a7a;border-color:rgba(0,0,0,0.25)"></div>
<div class="a" style="left:922px;top:421px;width:17px;height:17px;background:#00a45a;border:1px solid #7a7a7a;border-color:rgba(0,0,0,0.25)"></div>
<div class="a" style="left:922px;top:438px;width:17px;height:17px;background:#fde313;border:1px solid #7a7a7a;border-color:rgba(0,0,0,0.25)"></div>
<div class="a" style="left:922px;top:455px;width:17px;height:17px;background:#df2b1f;border:1px solid #7a7a7a;border-color:rgba(0,0,0,0.25)"></div>
<div class="a" style="left:922px;top:472px;width:17px;height:17px;background:#e3068b;border:1px solid #7a7a7a;border-color:rgba(0,0,0,0.25)"></div>
<div class="a" style="left:922px;top:489px;width:17px;height:17px;background:#a7468e;border:1px solid #7a7a7a;border-color:rgba(0,0,0,0.25)"></div>
<div class="a" style="left:922px;top:506px;width:17px;height:17px;background:#f08200;border:1px solid #7a7a7a;border-color:rgba(0,0,0,0.25)"></div>
<div class="a" style="left:922px;top:523px;width:17px;height:17px;background:#feb9c0;border:1px solid #7a7a7a;border-color:rgba(0,0,0,0.25)"></div>
<div class="a" style="left:922px;top:540px;width:17px;height:17px;background:#7a6b62;border:1px solid #7a7a7a;border-color:rgba(0,0,0,0.25)"></div>
<div class="a" style="left:922px;top:557px;width:17px;height:17px;background:#dcd6f2;border:1px solid #7a7a7a;border-color:rgba(0,0,0,0.25)"></div>
<div class="a" style="left:923px;top:575px;width:16px;height:16px;border:1px solid #fff;border-radius:2px;background:linear-gradient(135deg,#d8e4fd,#b4c9f8)"></div>
<svg style="left:923px;top:575px" width="16" height="16"><path d="M4.5 6 L8 9.5 L11.5 6" stroke="#4d6185" stroke-width="2" fill="none"/></svg>
<svg style="left:927px;top:595px" width="8" height="11"><path d="M1 0.5 V10.5" stroke="#000" stroke-width="1.5"/><path d="M7 0.5 L2.5 5.5 L7 10.5 Z" fill="#000"/></svg>
<div class="a" style="left:921px;top:607px;width:40px;height:1px;background:#d8d4c6"></div>
<div class="a" style="left:4px;top:616px;width:957px;height:1px;background:#c8c4b4"></div><div class="a" style="left:4px;top:617px;width:957px;height:1px;background:#fff"></div>
<div class="t" style="left:8px;top:622px;letter-spacing:0.17px">( -12,897; 20,610 )</div>
<svg style="left:123px;top:623px" width="6" height="9"><path d="M0.5 0 L5 4.5 L0.5 9 Z" fill="#000"/></svg>
<div class="t" style="left:321px;top:622px">Кривая вкл. Слой 1</div>
<svg style="left:626px;top:622px" width="15" height="15"><defs><linearGradient id="gmon" x1="0" y1="0" x2="0" y2="1"><stop offset="0" stop-color="#d88a8a"/><stop offset="0.45" stop-color="#6aa060"/><stop offset="0.6" stop-color="#7aa0d8"/><stop offset="1" stop-color="#b0c8f0"/></linearGradient></defs><rect x="0.75" y="0.75" width="13.5" height="11" rx="1.5" fill="url(#gmon)" stroke="#5c5c8a" stroke-width="1.5"/><rect x="5" y="4" width="5" height="5" rx="1" fill="#fff" stroke="#4a4a6a" stroke-width="1.3"/><path d="M3 13.75 H12" stroke="#5c5c8a" stroke-width="1.5"/></svg>
<div class="t" style="left:8px;top:643px;letter-spacing:-0.06px">Цветовые профили документа: RGB: sRGB IEC61966-2.1; CMYK: ISO Coated v2 (ECI); Оттенки серого: Dot Gain 15%</div>
<svg style="left:603px;top:645px" width="6" height="9"><path d="M0.5 0 L5 4.5 L0.5 9 Z" fill="#000"/></svg>
<div class="a" style="left:695px;top:622px;width:2px;height:15px;border-left:1px solid #aca899;border-right:1px solid #fff"></div>
<svg style="left:699px;top:621px" width="17" height="17"><path d="M8 2 L14 8 L8 14 L2 8 Z" fill="#fff" stroke="#3a3e60" stroke-width="1.2"/><path d="M3 9 L8 13.5 L13 9 Z" fill="#f07800"/><path d="M12 5 H15 V14" stroke="#f07800" stroke-width="1.6" fill="none"/><path d="M5 1 L9 5" stroke="#3a3e60"/></svg>
<div class="a" style="left:721px;top:620px;width:18px;height:18px;background:#6e7f96;border:1px solid #555"></div>
<div class="t" style="left:741px;top:623px;letter-spacing:-0.05px">C:40 M:20 Y:0 K:40</div>
<svg style="left:703px;top:642px" width="10" height="16"><path d="M5 0.5 Q0.5 6 1.5 11 H8.5 Q9.5 6 5 0.5 Z" fill="#f4f4f8" stroke="#4c4c70"/><path d="M5 3 V9" stroke="#4c4c70"/><rect x="1" y="12" width="8" height="3" fill="#33365a"/></svg>
<div class="a" style="left:721px;top:641px;width:18px;height:18px;background:#171918;border:1px solid #444"></div>
<div class="t" style="left:741px;top:644px;white-space:pre;letter-spacing:-0.12px">C:0 M:0 Y:0 K:100  0,200 мм</div>
<svg style="left:917px;top:624px" width="18" height="18"><rect x="0.5" y="0.5" width="14" height="14" fill="#fff" stroke="#888"/><circle cx="7.5" cy="5" r="3" fill="#d84010"/><path d="M2 14 Q2 8 7.5 8 Q13 8 13 14 Z" fill="#d84010"/><path d="M17 13 V18 H12 Z" fill="#000"/></svg>
<svg style="left:949px;top:650px" width="11" height="11"><g fill="#c4c0b0"><rect x="8" y="0" width="2" height="2"/><rect x="4" y="4" width="2" height="2"/><rect x="8" y="4" width="2" height="2"/><rect x="0" y="8" width="2" height="2"/><rect x="4" y="8" width="2" height="2"/><rect x="8" y="8" width="2" height="2"/></g></svg>
</div></body></html>
